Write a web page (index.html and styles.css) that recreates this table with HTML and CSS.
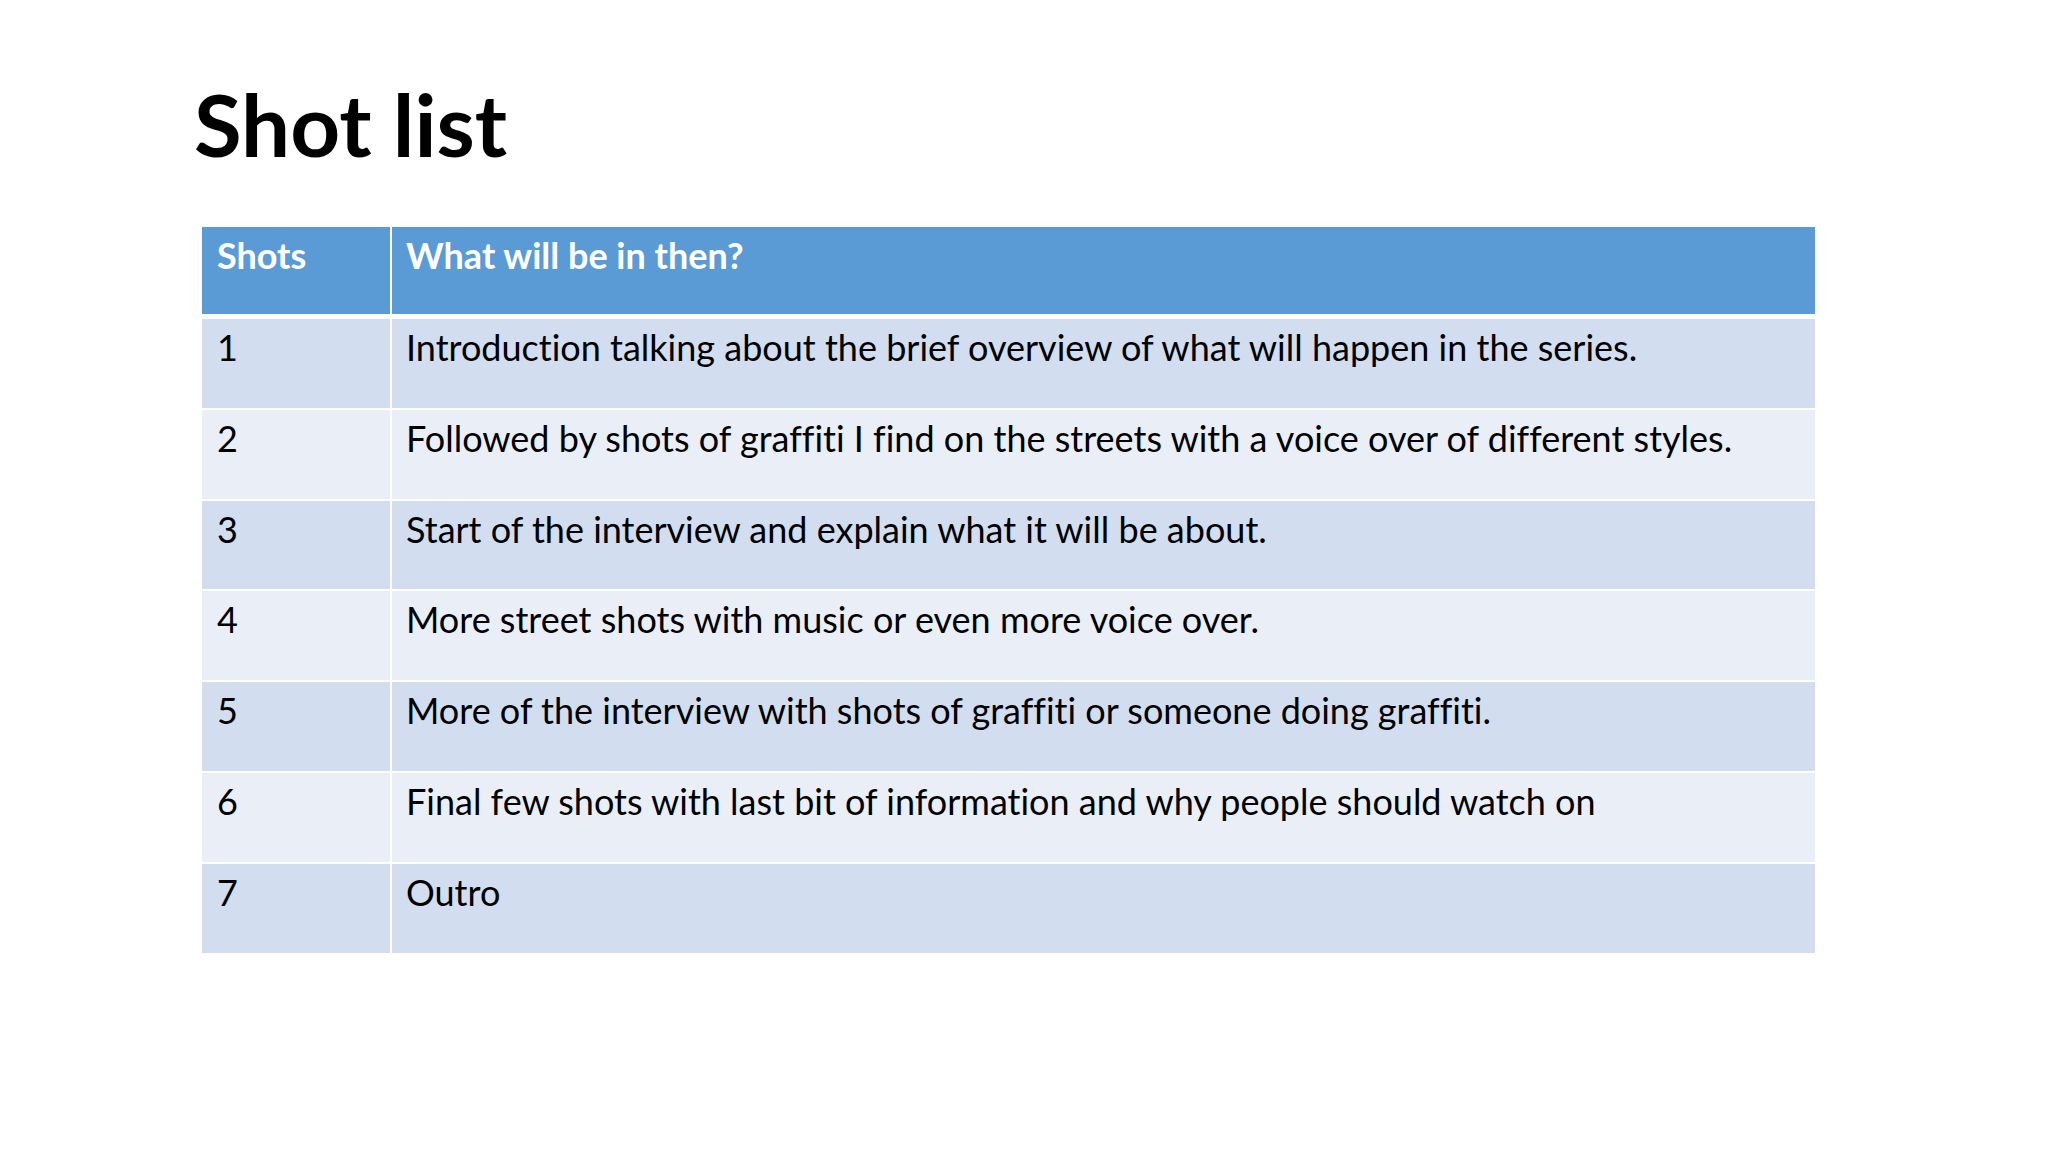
FILE: index.html
```html
<!DOCTYPE html>
<html>
<head>
<meta charset="utf-8">
<link rel="stylesheet" href="styles.css">
</head>
<body>
<div class="slide">
  <h1 class="title">Shot list</h1>
  <div class="table">
    <div class="row head"><div class="c1">Shots</div><div class="c2">What will be in then?</div></div>
    <div class="row odd"><div class="c1">1</div><div class="c2">Introduction talking about the brief overview of what will happen in the series.</div></div>
    <div class="row even"><div class="c1">2</div><div class="c2">Followed by shots of graffiti I find on the streets with a voice over of different styles.</div></div>
    <div class="row odd"><div class="c1">3</div><div class="c2">Start of the interview and explain what it will be about.</div></div>
    <div class="row even"><div class="c1">4</div><div class="c2">More street shots with music or even more voice over.</div></div>
    <div class="row odd"><div class="c1">5</div><div class="c2">More of the interview with shots of graffiti or someone doing graffiti.</div></div>
    <div class="row even"><div class="c1">6</div><div class="c2">Final few shots with last bit of information and why people should watch on</div></div>
    <div class="row odd"><div class="c1">7</div><div class="c2">Outro</div></div>
  </div>
</div>
</body>
</html>
```
FILE: styles.css
```css
html, body {
  margin: 0;
  padding: 0;
  background: #ffffff;
}
.slide {
  width: 2048px;
  height: 1152px;
  box-sizing: border-box;
  padding: 80px 0 0 194px;
  font-family: Lato, "Open Sans", sans-serif;
  font-variant-ligatures: none;
  color: #000;
}
.title {
  margin: 0;
  font-size: 87px;
  line-height: 87px;
  font-weight: 700;
  height: 147px;
}
.table {
  margin-left: 8px;
  width: 1613px;
  display: flex;
  flex-direction: column;
  gap: 2px;
}
.row {
  display: grid;
  grid-template-columns: 188px 1fr;
  column-gap: 2px;
  height: 88.8px;
  font-size: 36px;
  line-height: 46px;
}
.row.head {
  height: 87px;
  margin-bottom: 3px;
  color: #fff;
  font-weight: 700;
}
.row > div {
  padding: 5px 15px 0 15px;
  white-space: nowrap;
}
.row .c2 {
  padding-left: 14px;
}
.head > div { background: #5b9bd5; }
.odd > div { background: #d2deef; }
.even > div { background: #eaeff7; }
```
